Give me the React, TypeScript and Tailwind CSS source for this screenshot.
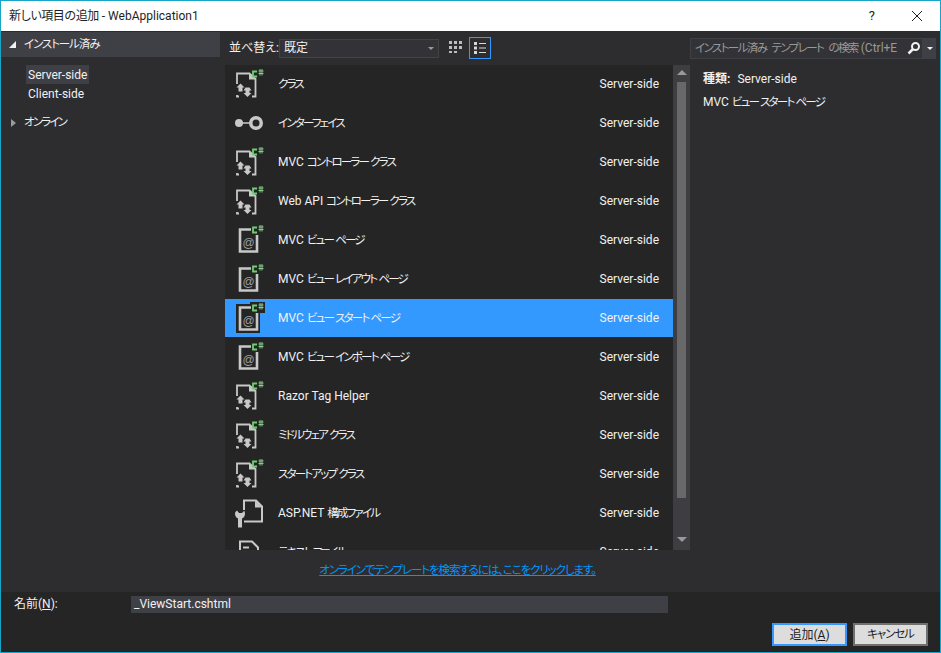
type IconKind = 'cs' | 'iface' | 'at' | 'wrench' | 'doc';

type Row = {
  label: string;
  icon: IconKind;
};

const rows: Row[] = [
  { label: 'クラス', icon: 'cs' },
  { label: 'インターフェイス', icon: 'iface' },
  { label: 'MVC コントローラー クラス', icon: 'cs' },
  { label: 'Web API コントローラー クラス', icon: 'cs' },
  { label: 'MVC ビュー ページ', icon: 'at' },
  { label: 'MVC ビュー レイアウト ページ', icon: 'at' },
  { label: 'MVC ビュー スタート ページ', icon: 'at' },
  { label: 'MVC ビュー インポート ページ', icon: 'at' },
  { label: 'Razor Tag Helper', icon: 'cs' },
  { label: 'ミドルウェア クラス', icon: 'cs' },
  { label: 'スタートアップ クラス', icon: 'cs' },
  { label: 'ASP.NET 構成ファイル', icon: 'wrench' },
  { label: 'テキスト ファイル', icon: 'doc' },
];

// Japanese runs are set tighter than Latin, the UI font in the reference is narrow
function Jp({ text, tight }: { text: string; tight?: boolean }) {
  const parts = text.split(/([\u3000-\u30ff\u4e00-\u9fff]+(?: [\u3000-\u30ff\u4e00-\u9fff]+)*)/);
  const cls = tight ? 'text-[11.5px] tracking-[-1.8px] [word-spacing:1px]' : 'text-[11.5px] tracking-[-1.1px]';
  return (
    <>
      {parts.map((part, i) =>
        i % 2 === 1 ? (
          <span key={i} className={cls}>
            {part}
          </span>
        ) : (
          part
        ),
      )}
    </>
  );
}

function CSharpBadge() {
  return (
    <>
      <path d="M23 3.500h-4v5h4" fill="none" stroke="#6fcf70" strokeWidth="1.800" />
      <path d="M24.500 3h5M24.500 5.500h5M26 1v6.500M28 1v6.500" stroke="#8fd890" strokeWidth="0.900" />
    </>
  );
}

function ItemIcon({ kind, selected }: { kind: IconKind; selected?: boolean }) {
  if (kind === 'iface') {
    return (
      <svg width="32" height="32" viewBox="0 0 32 32">
        <circle cx="5" cy="16" r="4" fill="#c8c8c8" />
        <path d="M8 16h8" stroke="#c8c8c8" strokeWidth="1.500" />
        <circle cx="22" cy="16" r="5.250" fill="none" stroke="#c8c8c8" strokeWidth="3.500" />
      </svg>
    );
  }
  if (kind === 'at') {
    return (
      <svg width="32" height="32" viewBox="0 0 32 32">
        {selected && <path d="M2 2h14V0h15v11h-5v20H2z" fill="#252526" />}
        <path d="M17 5.500H6v22h17V11" fill="none" stroke="#c8c8c8" strokeWidth="2.600" />
        <text x="14.500" y="23" textAnchor="middle" fontSize="12" fill="#a0a0a0" fontFamily="'Liberation Sans', sans-serif">@</text>
        <CSharpBadge />
      </svg>
    );
  }
  if (kind === 'wrench') {
    return (
      <svg width="32" height="32" viewBox="0 0 32 32">
        <path d="M10 13V3.500h12l6 6v15H10" fill="none" stroke="#c8c8c8" strokeWidth="2" />
        <path d="M21 3.500v7h7z" fill="#c8c8c8" />
        <path d="M1 16.500c0 2.500 1 4 3 5v9h4v-9c2-1 3-2.500 3-5 0-1-.3-2-.8-2.800L8 16H5L3 13.500c-1.200.8-2 2-2 3z" fill="#c8c8c8" />
      </svg>
    );
  }
  if (kind === 'doc') {
    return (
      <svg width="32" height="32" viewBox="0 0 32 32">
        <path d="M6 30V5.500h12l6 6V30" fill="none" stroke="#c8c8c8" strokeWidth="2" />
        <path d="M9 11.500h6M9 16h11" stroke="#c8c8c8" strokeWidth="2" />
      </svg>
    );
  }
  return (
    <svg width="32" height="32" viewBox="0 0 32 32">
      <path d="M3 16V5.500h12.500l6 5.500v17.500H18M3 27v1.500h2" fill="none" stroke="#c8c8c8" strokeWidth="1.800" />
      <path d="M15 5.500v6h6.500z" fill="#c8c8c8" />
      <path d="M6.500 15.500l4 4H8.500v4h-4v-4H2.500z" fill="#c8c8c8" />
      <path d="M13.500 29l-4-4h2v-2.500h-2l2-3h4l2 3h-2V25h2z" fill="#c8c8c8" />
      {selected && <rect x="16.500" y="0" width="14" height="10" fill="#252526" />}
      <CSharpBadge />
    </svg>
  );
}

function ListRow({ row, selected }: { row: Row; selected: boolean }) {
  return (
    <div className={`mb-[1px] flex h-[38px] shrink-0 items-center ${selected ? 'bg-[#3399ff]' : ''}`}>
      <div className="ml-[9px] flex w-[44px] shrink-0 items-center">
        <ItemIcon kind={row.icon} selected={selected} />
      </div>
      <span className="text-[#f1f1f1]">
        <Jp text={row.label} tight />
      </span>
      <span className="ml-auto mr-[14px] text-[#f1f1f1]">Server-side</span>
    </div>
  );
}

export default function App() {
  return (
    <div
      className="flex h-[653px] w-[941px] flex-col overflow-hidden border border-[#17a5c8] bg-[#2d2d30] text-[12px] text-[#f1f1f1] [font-feature-settings:'palt']"
      style={{ fontFamily: "Roboto, 'Noto Sans CJK JP', sans-serif" }}
    >
      {/* Title bar */}
      <div className="flex h-[30px] shrink-0 items-center bg-white pl-[8px] text-[#1e1e1e]">
        <span>
          <span className="tracking-[-0.4px]">新しい項目の追加</span> - WebApplication1
        </span>
        <span className="ml-auto mr-[36px] text-[13px]">?</span>
        <svg width="12" height="12" viewBox="0 0 12 12" className="mr-[17px]">
          <path d="M1 1l10 10M11 1L1 11" stroke="#1e1e1e" strokeWidth="1" />
        </svg>
      </div>

      <div className="flex min-h-0 flex-1">
        {/* Left tree */}
        <div className="w-[224px] shrink-0 pt-[1px]">
          <div className="flex h-[25px] w-[219px] items-center bg-[#3f3f46] pl-[8px]">
            <span className="mr-[8px] h-0 w-0 border-b-[7px] border-l-[7px] border-b-[#f1f1f1] border-l-transparent" />
            <span>
              <Jp text="インストール済み" />
            </span>
          </div>
          <div className="mt-[8px] flex flex-col items-start pl-[25px]">
            <div className="flex h-[19px] items-center bg-[#3f3f46] px-[2px]">Server-side</div>
            <div className="flex h-[19px] items-center px-[2px]">Client-side</div>
          </div>
          <div className="mt-[10px] flex h-[19px] items-center pl-[10px]">
            <span className="mr-[8px] h-0 w-0 border-y-[4px] border-l-[5px] border-y-transparent border-l-[#9a9a9a]" />
            <span>
              <Jp text="オンライン" tight />
            </span>
          </div>
        </div>

        {/* Centre */}
        <div className="flex w-[465px] shrink-0 flex-col">
          <div className="flex h-[34px] shrink-0 items-center pl-[4px]">
            <span className="w-[50px] shrink-0">並べ替え:</span>
            <div className="flex h-[19px] w-[160px] shrink-0 items-center border border-[#434346] bg-[#333337] pl-[4px]">
              <span>既定</span>
              <span className="ml-auto mr-[4px] h-0 w-0 border-x-[3px] border-t-[3px] border-x-transparent border-t-[#999999]" />
            </div>
            <svg width="14" height="14" viewBox="0 0 14 14" className="ml-[10px]" fill="#bdbdbd">
              <path d="M0 0h3v3H0zM5 0h3v3H5zM10 0h3v3h-3zM0 5h3v3H0zM5 5h3v3H5zM10 5h3v3h-3zM0 10h3v2H0zM5 10h3v2H5z" />
            </svg>
            <div className="ml-[6px] flex h-[22px] w-[22px] items-center justify-center border border-[#3399ff]">
              <svg width="14" height="14" viewBox="0 0 14 14" fill="#d8d8d8">
                <path d="M1 1h3v3H1zM6 2h7v1H6zM1 5.500h3v3H1zM6 6.500h7v1H6zM1 10h3v3H1zM6 11h7v1H6z" />
              </svg>
            </div>
          </div>

          <div className="flex h-[485px] shrink-0 overflow-hidden">
            <div className="flex w-[448px] shrink-0 flex-col overflow-hidden bg-[#252526]">
              {rows.map((row, i) => (
                <ListRow key={row.label} row={row} selected={i === 6} />
              ))}
            </div>
            <div className="flex w-[17px] shrink-0 flex-col items-center bg-[#3e3e42]">
              <span className="mt-[5px] h-0 w-0 border-x-[5px] border-b-[5px] border-x-transparent border-b-[#999999]" />
              <div className="mt-[7px] h-[416px] w-[9px] bg-[#686868]" />
              <span className="mt-[39px] h-0 w-0 border-x-[5px] border-t-[5px] border-x-transparent border-t-[#999999]" />
            </div>
          </div>

          <div className="flex h-[42px] shrink-0 items-center justify-center text-[#0097fb] underline">
            <Jp text="オンラインでテンプレートを検索するには、ここをクリックします。" />
          </div>
        </div>

        {/* Right details */}
        <div className="min-w-0 flex-1">
          <div className="flex h-[34px] items-center">
            <div className="flex h-[21px] w-[233px] shrink-0 items-center whitespace-nowrap border border-[#3f3f46] bg-[#333337] pl-[4px] text-[#999999]">
              <span>
                <span className="text-[11.5px] tracking-[-1.6px] [word-spacing:4px]">インストール済み テンプレート の検索</span> (Ctrl+E
              </span>
              <svg width="14" height="14" viewBox="0 0 14 14" className="ml-auto mr-[1px] shrink-0">
                <circle cx="8.500" cy="5.500" r="3.500" fill="none" stroke="#f1f1f1" strokeWidth="2" />
                <path d="M6 8l-4.500 4.500" stroke="#f1f1f1" strokeWidth="2.500" />
              </svg>
            </div>
            <div className="flex h-[21px] w-[13px] items-center justify-center bg-[#3f3f46]">
              <span className="h-0 w-0 border-x-[3px] border-t-[3px] border-x-transparent border-t-[#f1f1f1]" />
            </div>
          </div>
          <div className="pl-[13px] pt-[4px]">
            <div className="flex h-[20px] items-center gap-[7px]">
              <span className="font-bold">種類:</span>
              <span>Server-side</span>
            </div>
            <div className="mt-[3px] flex h-[20px] items-center">
              <span>
                <Jp text="MVC ビュー スタート ページ" tight />
              </span>
            </div>
          </div>
        </div>
      </div>

      {/* Bottom panel */}
      <div className="h-[60px] shrink-0 bg-[#252526]">
        <div className="flex h-[24px] items-center pl-[13px]">
          <span className="w-[117px]">
            名前(<span className="underline">N</span>):
          </span>
          <div className="flex h-[17px] w-[537px] items-center bg-[#3f3f46] pl-[3px]">_ViewStart.cshtml</div>
        </div>
        <div className="mt-[7px] flex justify-end gap-[6px] pr-[12px] text-[#1e1e1e]">
          <button className="h-[23px] w-[75px] border-2 border-[#3399ff] bg-[#dddddd]">
            追加(<span className="underline">A</span>)
          </button>
          <button className="h-[23px] w-[75px] border-2 border-[#707070] bg-[#dddddd]">
            <Jp text="キャンセル" />
          </button>
        </div>
      </div>
    </div>
  );
}
